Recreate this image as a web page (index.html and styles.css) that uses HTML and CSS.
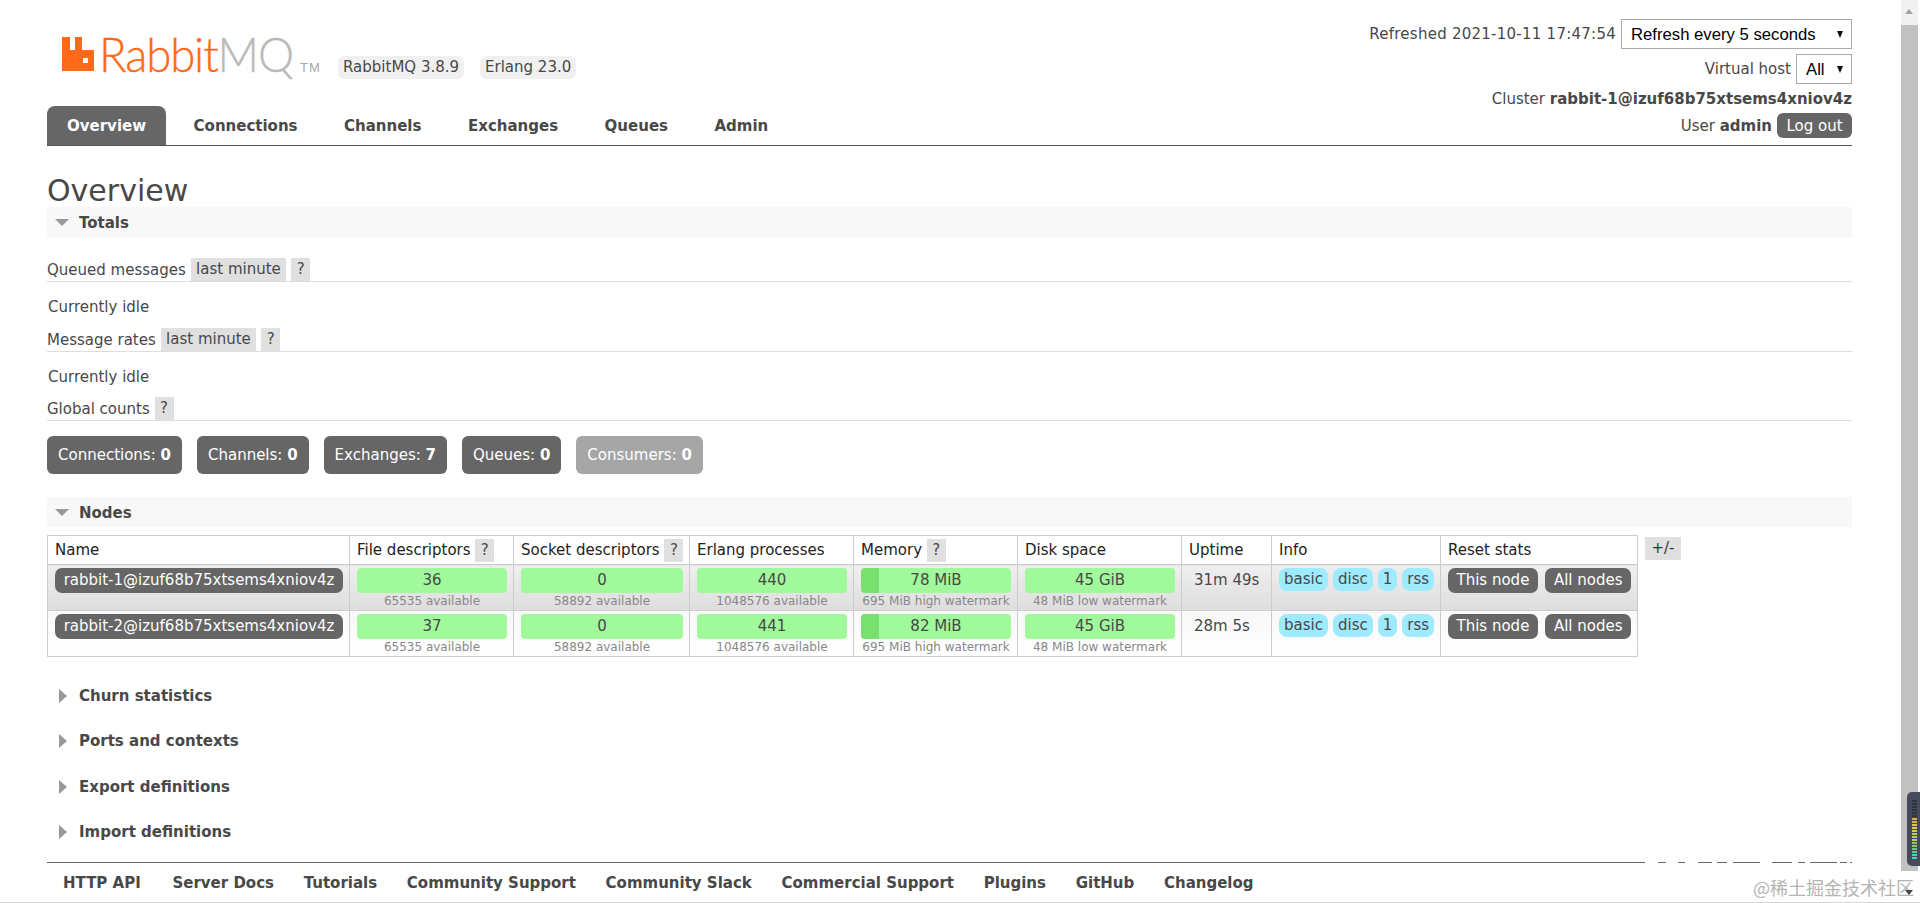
FILE: index.html
```html
<!DOCTYPE html>
<html lang="en">
<head>
<meta charset="utf-8">
<title>RabbitMQ Management</title>
<link rel="stylesheet" href="styles.css">
</head>
<body>
<div class="page">
  <header class="header">
    <div class="header-left">
      <div class="brand">
        <div class="logo">
          <svg class="logo-mark" viewBox="0 0 32 34" width="32" height="34"><path fill="#ff6a1a" fill-rule="evenodd" d="M0 0h8v13h5V0h7v13h12v21H0zM21 21v5h5v-5z"/></svg>
          <span class="logo-word"><span class="logo-rabbit">Rabbit</span><span class="logo-mq">MQ</span></span>
          <span class="logo-tm">TM</span>
        </div>
        <span class="version v1">RabbitMQ 3.8.9</span>
        <span class="version">Erlang 23.0</span>
      </div>
      <nav class="tabs">
        <a class="tab active">Overview</a>
        <a class="tab">Connections</a>
        <a class="tab">Channels</a>
        <a class="tab">Exchanges</a>
        <a class="tab">Queues</a>
        <a class="tab">Admin</a>
      </nav>
    </div>
    <div class="header-right">
      <div class="hrow"><span class="refreshed">Refreshed 2021-10-11 17:47:54</span>
        <div class="selectbox refresh"><select><option>Refresh every 5 seconds</option></select><span class="sel-arrow"></span></div>
      </div>
      <div class="hrow">Virtual host
        <div class="selectbox vhost"><select><option>All</option></select><span class="sel-arrow"></span></div>
      </div>
      <div class="hrow text">Cluster&nbsp;<b>rabbit-1@izuf68b75xtsems4xniov4z</b></div>
      <div class="hrow">User&nbsp;<b>admin</b><button class="logout">Log out</button></div>
    </div>
  </header>

  <h1 class="title">Overview</h1>

  <section class="section-bar"><i class="tri-down"></i><span>Totals</span></section>

  <div class="sub-head first">Queued messages <span class="help-tag">last minute</span><span class="help-tag q">?</span></div>
  <p class="idle">Currently idle</p>
  <div class="sub-head second">Message rates <span class="help-tag">last minute</span><span class="help-tag q">?</span></div>
  <p class="idle">Currently idle</p>
  <div class="sub-head">Global counts <span class="help-tag q near">?</span></div>

  <div class="counts">
    <a class="count">Connections: <b>0</b></a>
    <a class="count">Channels: <b>0</b></a>
    <a class="count">Exchanges: <b>7</b></a>
    <a class="count">Queues: <b>0</b></a>
    <a class="count off">Consumers: <b>0</b></a>
  </div>

  <section class="section-bar nodes"><i class="tri-down"></i><span>Nodes</span></section>

  <div class="table-wrap">
    <table class="nodes-table">
      <colgroup>
        <col class="c-name"><col class="c-fd"><col class="c-sock"><col class="c-proc"><col class="c-mem"><col class="c-disk"><col class="c-up"><col class="c-info"><col class="c-reset">
      </colgroup>
      <thead>
        <tr>
          <th>Name</th>
          <th>File descriptors <span class="help-tag q th-q">?</span></th>
          <th>Socket descriptors <span class="help-tag q th-q">?</span></th>
          <th>Erlang processes</th>
          <th>Memory <span class="help-tag q th-q">?</span></th>
          <th>Disk space</th>
          <th>Uptime</th>
          <th>Info</th>
          <th>Reset stats</th>
        </tr>
      </thead>
      <tbody>
        <tr class="alt1">
          <td><a class="node">rabbit-1@izuf68b75xtsems4xniov4z</a></td>
          <td><div class="bar">36</div><small>65535 available</small></td>
          <td><div class="bar">0</div><small>58892 available</small></td>
          <td><div class="bar">440</div><small>1048576 available</small></td>
          <td><div class="bar mem"><i class="fill"></i><span>78 MiB</span></div><small>695 MiB high watermark</small></td>
          <td><div class="bar">45 GiB</div><small>48 MiB low watermark</small></td>
          <td class="up">31m 49s</td>
          <td><div class="badges"><abbr>basic</abbr><abbr>disc</abbr><abbr>1</abbr><abbr>rss</abbr></div></td>
          <td><div class="resets"><a class="reset wide">This node</a><a class="reset">All nodes</a></div></td>
        </tr>
        <tr class="alt2">
          <td><a class="node">rabbit-2@izuf68b75xtsems4xniov4z</a></td>
          <td><div class="bar">37</div><small>65535 available</small></td>
          <td><div class="bar">0</div><small>58892 available</small></td>
          <td><div class="bar">441</div><small>1048576 available</small></td>
          <td><div class="bar mem"><i class="fill"></i><span>82 MiB</span></div><small>695 MiB high watermark</small></td>
          <td><div class="bar">45 GiB</div><small>48 MiB low watermark</small></td>
          <td class="up">28m 5s</td>
          <td><div class="badges"><abbr>basic</abbr><abbr>disc</abbr><abbr>1</abbr><abbr>rss</abbr></div></td>
          <td><div class="resets"><a class="reset wide">This node</a><a class="reset">All nodes</a></div></td>
        </tr>
      </tbody>
    </table>
    <span class="plus">+/-</span>
  </div>

  <div class="collapsed-list">
    <div class="collapsed"><i class="tri-right"></i>Churn statistics</div>
    <div class="collapsed"><i class="tri-right"></i>Ports and contexts</div>
    <div class="collapsed"><i class="tri-right"></i>Export definitions</div>
    <div class="collapsed"><i class="tri-right"></i>Import definitions</div>
  </div>

  <footer class="footer">
    <a>HTTP API</a><a>Server Docs</a><a>Tutorials</a><a>Community Support</a><a>Community Slack</a><a>Commercial Support</a><a>Plugins</a><a>GitHub</a><a>Changelog</a>
  </footer>
</div>

<div class="scrollbar">
  <i class="sb-up"></i>
  <div class="sb-thumb"></div>
</div>
<div class="meter">
  <i class="m0"></i><i class="m0"></i><i class="m0"></i><i class="m0"></i><i class="m0"></i><i class="m0"></i>
  <i class="m1"></i><i class="m1"></i><i class="m2"></i><i class="m2"></i><i class="m2"></i><i class="m3"></i><i class="m3"></i><i class="m3"></i><i class="m4"></i><i class="m4"></i><i class="m5"></i><i class="m5"></i><i class="m6"></i><i class="m6"></i>
</div>
<div class="watermark">@稀土掘金技术社区</div>
<i class="wm-arrow"></i>
<div class="window-edge"></div>
</body>
</html>
```

FILE: styles.css
```css
* { box-sizing: border-box; }
html, body { margin: 0; height: 903px; overflow: hidden; background: #fff; }
body {
  position: relative;
  font: 15px/18px "DejaVu Sans", Verdana, sans-serif;
  color: #484848;
}
a { color: inherit; text-decoration: none; }

.page { width: 1852px; padding-left: 47px; }

/* header */
.header {
  display: flex;
  justify-content: space-between;
  height: 146px;
  border-bottom: 1px solid #555;
}
.header-left { display: flex; flex-direction: column; justify-content: flex-end; }
.brand { display: flex; align-items: flex-start; height: 106px; padding: 37px 0 0 15px; }
.logo { display: flex; width: 276px; position: relative; }
.logo-mark { flex: none; }
.logo-word {
  display: block;
  margin-left: 5px;
  font: 300 48px/34px Lato, "Liberation Sans", sans-serif;
  letter-spacing: -1.2px;
  -webkit-text-stroke: .35px currentColor;
  transform: scaleX(.95);
  transform-origin: left;
  white-space: nowrap;
}
.logo-rabbit { color: #ff6a1a; }
.logo-mq { color: #b9b9b9; }
.logo-tm {
  position: absolute;
  left: 238px;
  top: 24px;
  font: 13px/14px "Liberation Sans", sans-serif;
  color: #a8a8a8;
  letter-spacing: 1px;
}
.version {
  margin-top: 19px;
  height: 23px;
  padding: 0 5px;
  background: #f0f0f0;
  border-radius: 6px;
  font-size: 15px;
  line-height: 23px;
  white-space: nowrap;
}
.version.v1 { margin-right: 16px; }
.tabs { display: flex; height: 39px; gap: 46.5px; }
.tab {
  line-height: 41px;
  font-weight: bold;
  font-size: 15px;
  white-space: nowrap;
}
.tab.active { background: #666; color: #fff; border-radius: 8px 8px 0 0; padding: 0 20px; margin-right: -19px; }

.header-right {
  display: flex;
  flex-direction: column;
  align-items: flex-end;
  padding-top: 19px;
  gap: 5px;
}
.hrow { display: flex; align-items: center; height: 30px; white-space: nowrap; }
.hrow.text { height: 18px; margin-top: 1px; }
.hrow:last-child { height: 25px; margin-top: 0; }
.refreshed { letter-spacing: .25px; }
.selectbox { position: relative; margin-left: 5px; height: 30px; }
.selectbox select {
  appearance: none;
  -webkit-appearance: none;
  display: block;
  height: 30px;
  width: 100%;
  padding: 0 0 0 9px;
  border: 1px solid #aaa;
  border-radius: 0;
  background: #fff;
  color: #000;
  font: 16.7px "Liberation Sans", Arial, sans-serif;
}
.refresh { width: 231px; }
.vhost { width: 56px; }
.sel-arrow {
  position: absolute;
  right: 9px;
  top: 12px;
  border-left: 3.5px solid transparent;
  border-right: 3.5px solid transparent;
  border-top: 7px solid #111;
}
.logout {
  margin-left: 5px;
  width: 75px;
  height: 25px;
  padding: 0;
  border: 0;
  border-radius: 6px;
  background: #666;
  color: #fff;
  font: 15px "DejaVu Sans", Verdana, sans-serif;
}

/* titles */
.title {
  margin: 0;
  height: 61px;
  padding-top: 28px;
  font-size: 30px;
  line-height: 34px;
  font-weight: normal;
  color: #484848;
}
.section-bar {
  display: flex;
  align-items: center;
  width: 1805px;
  height: 31px;
  padding-left: 8px;
  background: #f8f8f8;
  font-weight: bold;
}
.section-bar.nodes { margin-top: 23px; height: 30px; padding-top: 1px; }
.tri-down {
  width: 0;
  border-left: 7px solid transparent;
  border-right: 7px solid transparent;
  border-top: 7px solid #999;
  margin-right: 10px;
}

.sub-head {
  display: flex;
  align-items: center;
  width: 1805px;
  height: 24px;
  margin-top: 11px;
  border-bottom: 1px solid #ddd;
  white-space: pre;
}
.sub-head.first { margin-top: 20px; }
.sub-head.second { margin-top: 12px; }
.help-tag {
  height: 23px;
  padding: 0 5.5px;
  background: #e0e0e0;
  line-height: 23px;
}
.help-tag.q { margin-left: 5px; padding: 0 5.5px; }
.help-tag.near { margin-left: 0; }
.idle { margin: 16px 0 0; height: 18px; padding-left: 1px; }

.counts { display: flex; gap: 15px; margin-top: 15px; }
.count {
  height: 38px;
  padding: 0 11px;
  line-height: 38px;
  border-radius: 6px;
  background: #666;
  color: #fff;
  white-space: nowrap;
}
.count.off { background: #a6a6a6; }

/* table */
.table-wrap { display: flex; align-items: flex-start; gap: 7px; margin-top: 8px; }
.nodes-table {
  table-layout: fixed;
  width: 1590px;
  flex: none;
  border-collapse: collapse;
  border: 1px solid #ccc;
}
.c-name { width: 302px; }
.c-fd { width: 164px; }
.c-sock { width: 176px; }
.c-proc, .c-mem, .c-disk { width: 164px; }
.c-up { width: 90px; }
.c-info { width: 169px; }
.c-reset { width: 197px; }
.nodes-table th {
  height: 29px;
  padding: 1px 7px 0;
  border: 1px solid #ccc;
  background: #fff;
  color: #222;
  font-weight: normal;
  line-height: 23px;
  text-align: left;
  white-space: nowrap;
}
.nodes-table td {
  height: 46px;
  padding: 3px 6px 0 7px;
  border: 1px solid #ccc;
  vertical-align: top;
  text-align: center;
}
.help-tag.th-q { display: inline-block; color: #484848; margin-left: 0; margin-top: -1px; }
.alt1 td { background: linear-gradient(#efefef, #ddd); }
.alt2 td { background: linear-gradient(#f8f8f8, #fff); }
.node {
  display: block;
  height: 25px;
  border-radius: 7px;
  background: #666;
  color: #fff;
  line-height: 25px;
  white-space: nowrap;
  text-align: center;
}
.bar {
  position: relative;
  height: 25px;
  border-radius: 4px;
  background: #a0f99b;
  line-height: 25px;
}
.bar.mem { overflow: hidden; }
.bar span { position: relative; }
.fill {
  position: absolute;
  left: 0;
  top: 0;
  bottom: 0;
  width: 18px;
  background: #78e06e;
}
.nodes-table small {
  display: block;
  margin-top: 1px;
  font-size: 12px;
  line-height: 15px;
  color: #888;
  white-space: nowrap;
}
.nodes-table td.up { text-align: left; padding: 6px 0 0 12px; white-space: nowrap; }
.badges { display: flex; gap: 5px; }
.badges abbr {
  height: 23px;
  padding: 0 5px;
  border-radius: 8px;
  background: #9eeaff;
  line-height: 23px;
}
.resets { display: flex; justify-content: space-between; }
.reset {
  height: 25px;
  padding: 0 8.5px;
  border-radius: 7px;
  background: #666;
  color: #fff;
  line-height: 25px;
  white-space: nowrap;
}
.plus {
  flex: none;
  height: 23px;
  width: 36px;
  margin-top: 2px;
  background: #e0e0e0;
  color: #333;
  text-align: center;
  line-height: 23px;
}

.collapsed-list { display: flex; flex-direction: column; gap: 27.3px; margin-top: 30px; }
.collapsed { display: flex; align-items: center; height: 18px; font-weight: bold; }
.tri-right {
  width: 0;
  margin: 0 12px;
  border-top: 7px solid transparent;
  border-bottom: 7px solid transparent;
  border-left: 8px solid #999;
}

.footer {
  display: flex;
  gap: 29.7px;
  width: 1805px;
  height: 30px;
  margin-top: 21px;
  padding: 12px 0 0 16px;
  font-weight: bold;
  white-space: nowrap;
  background: linear-gradient(90deg,
    #666 0 1598px, #fff 1598px 1611px, #666 1611px 1619px, #fff 1619px 1631px,
    #666 1631px 1638px, #fff 1638px 1651px, #666 1651px 1665px, #fff 1665px 1670px,
    #666 1670px 1680px, #fff 1680px 1686px, #666 1686px 1713px, #fff 1713px 1725px,
    #666 1725px 1745px, #fff 1745px 1751px, #666 1751px 1758px, #fff 1758px 1763px,
    #666 1763px 1790px, #fff 1790px 1793px, #666 1793px 1800px, #fff 1800px 1803px,
    #666 1803px 1805px) top left / 100% 1px no-repeat;
}
.footer a:first-child { margin-right: 2px; }

/* window chrome lying over the page */
.scrollbar {
  position: absolute;
  left: 1901px;
  top: 0;
  width: 17px;
  height: 871px;
  background: #f1f1f1;
}
.sb-up {
  position: absolute;
  left: 4px;
  top: 9px;
  border-left: 4.5px solid transparent;
  border-right: 4.5px solid transparent;
  border-bottom: 5px solid #a3a3a3;
}
.sb-thumb {
  position: absolute;
  left: 0;
  top: 25px;
  bottom: 0;
  width: 17px;
  background: #c1c1c1;
}
.meter {
  position: absolute;
  left: 1907px;
  top: 792px;
  width: 13px;
  height: 74px;
  padding: 8px 3px 0 5px;
  border-radius: 5px 0 0 5px;
  background: #454b5a;
  display: flex;
  flex-direction: column;
  gap: 1px;
}
.meter i { display: block; height: 2px; flex: none; }
.m0 { background: #2e3340; }
.m1 { background: #d3b048; }
.m2 { background: #d8cc48; }
.m3 { background: #b8cf55; }
.m4 { background: #86c86c; }
.m5 { background: #5cc890; }
.m6 { background: #40d8b0; }
.watermark {
  position: absolute;
  left: 1753px;
  top: 876px;
  font: 18px/22px "Noto Sans CJK SC", sans-serif;
  color: #b4b4b4;
  white-space: nowrap;
}
.wm-arrow {
  position: absolute;
  left: 1905px;
  top: 890px;
  border-left: 4px solid transparent;
  border-right: 4px solid transparent;
  border-top: 5px solid #444;
}
.window-edge {
  position: absolute;
  left: 0;
  right: 0;
  top: 902px;
  height: 1px;
  background: #d4d4d8;
}
```
